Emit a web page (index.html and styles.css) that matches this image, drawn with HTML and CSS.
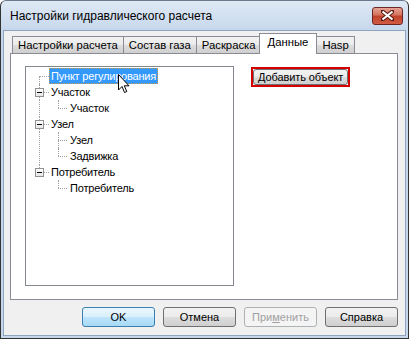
FILE: index.html
```html
<!DOCTYPE html>
<html lang="ru">
<head>
    <meta charset="UTF-8">
    <title>Настройки гидравлического расчета</title>
    <link rel="stylesheet" href="styles.css">
</head>
<body>
    <div class="window">
        <div class="titlebar">
            <span class="title">Настройки гидравлического расчета</span>
            <button class="close">
                <svg width="13" height="11" viewBox="0 0 13 11">
                    <path d="M1 1 L12 10 M12 1 L1 10" stroke="#5a1a12" stroke-width="4" stroke-linecap="square"/>
                    <path d="M1.5 1.5 L11.5 9.5 M11.5 1.5 L1.5 9.5" stroke="#fff" stroke-width="2.2"/>
                </svg>
            </button>
        </div>
        <div class="client">
            <div class="tabs">
                <div class="tab">Настройки расчета</div>
                <div class="tab">Состав газа</div>
                <div class="tab">Раскраска</div>
                <div class="tab active">Данные</div>
                <div class="tab">Hasp</div>
            </div>
            <div class="panel">
                <div class="tree">
                    <div class="node root first">
                        <span class="label selected">Пункт регулирования</span>
                    </div>
                    <div class="node root">
                        <span class="box"></span>
                        <span class="label">Участок</span>
                    </div>
                    <div class="node child last">
                        <span class="label">Участок</span>
                    </div>
                    <div class="node root">
                        <span class="box"></span>
                        <span class="label">Узел</span>
                    </div>
                    <div class="node child">
                        <span class="label">Узел</span>
                    </div>
                    <div class="node child last">
                        <span class="label">Задвижка</span>
                    </div>
                    <div class="node root last-root">
                        <span class="box"></span>
                        <span class="label">Потребитель</span>
                    </div>
                    <div class="node child last no-trunk">
                        <span class="label">Потребитель</span>
                    </div>
                    <svg class="cursor" width="12" height="20" viewBox="0 0 12 20">
                        <path d="M0.5 0.5 L0.5 16 L4 12.5 L6.5 18.5 L8.8 17.5 L6.3 11.8 L11 11.8 Z" fill="#fff" stroke="#000" stroke-width="1"/>
                    </svg>
                </div>
                <div class="side">
                    <div class="add-wrap">
                        <button class="btn add">Добавить объект</button>
                    </div>
                </div>
            </div>
            <div class="buttons">
                <button class="btn default">OK</button>
                <button class="btn">Отмена</button>
                <button class="btn disabled">При<u>м</u>енить</button>
                <button class="btn">Справка</button>
            </div>
        </div>
    </div>
</body>
</html>
```

FILE: styles.css
```css
body {
    margin: 0;
    font-family: "Liberation Sans", Arial, sans-serif;
    font-size: 11px;
    color: #000;
}
.window {
    width: 409px;
    height: 339px;
    box-sizing: border-box;
    border: 1px solid #333;
    border-top-color: #6b7a8c;
    border-radius: 6px 6px 0 0;
    background: linear-gradient(#dfe9f5, #c6d7ec 30px, #c6d7ec);
    padding: 0 2px 2px 2px;
    display: flex;
    flex-direction: column;
}
.titlebar {
    height: 29px;
    display: flex;
    align-items: center;
    padding: 0 3px 0 7px;
}
.title {
    font-size: 12px;
    color: #000;
    flex: 1;
}
.close {
    width: 31px;
    height: 18px;
    padding: 0;
    border: 1px solid #6d2626;
    border-radius: 3px;
    background: linear-gradient(#e6a495, #d46f5b 45%, #c0412a 50%, #d25b43);
    display: flex;
    align-items: center;
    justify-content: center;
}
.client {
    flex: 1;
    background: #f0f0f0;
    border: 1px solid #8ea3bd;
    display: flex;
    flex-direction: column;
    padding: 2px 7px 0 6px;
}
.tabs {
    display: flex;
    align-items: flex-end;
    height: 20px;
    padding-left: 2px;
    position: relative;
    z-index: 1;
    font-size: 11.3px;
}
.tab {
    height: 16px;
    padding: 0 5px;
    border: 1px solid #898c95;
    border-bottom: none;
    background: linear-gradient(#f2f2f2, #ebebeb 50%, #dddddd 50%, #cfcfcf);
    line-height: 16px;
    margin-right: -1px;
}
.tab.active {
    line-height: 17px;
    background: #fff;
    margin: 0 -1px -1px -2px;
    padding: 0 8px;
    position: relative;
    z-index: 2;
    height: 20px;
}
.panel {
    height: 247px;
    box-sizing: border-box;
    background: #fff;
    border: 1px solid #898c95;
    display: flex;
    padding: 12px 0 0 14px;
}
.tree {
    position: relative;
    width: 209px;
    height: 220px;
    box-sizing: border-box;
    border: 1px solid #828790;
    padding-top: 1px;
    font-size: 11px;
    letter-spacing: -0.2px;
}
.node {
    position: relative;
    height: 16px;
    display: flex;
    align-items: center;
}
.node.root {
    padding-left: 23px;
}
.node.child {
    padding-left: 42px;
}
.label {
    padding: 0 1px;
    line-height: 14px;
    border: 1px dotted transparent;
}
.label.selected {
    background: #3399ff;
    color: #fff;
    border: 1px dotted #c89a4b;
}
/* dotted tree lines */
.node.root::before {
    content: "";
    position: absolute;
    left: 13px;
    top: 8px;
    width: 10px;
    border-top: 1px dotted #a0a0a0;
}
.node.root::after {
    content: "";
    position: absolute;
    left: 13px;
    top: 0;
    height: 16px;
    border-left: 1px dotted #a0a0a0;
}
.node.first::after {
    top: 8px;
    height: 8px;
}
.node.last-root::after {
    height: 8px;
}
.node.child::before {
    content: "";
    position: absolute;
    left: 32px;
    top: 8px;
    width: 9px;
    border-top: 1px dotted #a0a0a0;
}
.node.child::after {
    content: "";
    position: absolute;
    left: 32px;
    top: 0;
    height: 16px;
    border-left: 1px dotted #a0a0a0;
}
.node.child.last::after {
    height: 8px;
}
.node.child {
    background-image: linear-gradient(#a0a0a0 50%, transparent 50%);
    background-size: 1px 2px;
    background-position: 13px 0;
    background-repeat: repeat-y;
}
.node.no-trunk {
    background: none;
}
.box {
    position: absolute;
    left: 9px;
    top: 4px;
    width: 7px;
    height: 7px;
    border: 1px solid #919191;
    background: linear-gradient(#fff, #e6e6e6);
    z-index: 1;
}
.box::after {
    content: "";
    position: absolute;
    left: 1px;
    top: 3px;
    width: 5px;
    height: 1px;
    background: #000;
}
.cursor {
    position: absolute;
    left: 92px;
    top: 7px;
}
.side {
    padding: 1px 0 0 17px;
}
.add-wrap {
    border: 2px solid #d40000;
}
.btn {
    font-family: "Liberation Sans", Arial, sans-serif;
    font-size: 11px;
    font-weight: normal;
    color: #000;
    border: 1px solid #707070;
    border-radius: 3px;
    background: linear-gradient(#f2f2f2, #ebebeb 50%, #dddddd 50%, #cfcfcf);
    padding: 0;
    display: block;
}
.add {
    height: 16px;
    padding: 0 4px;
    letter-spacing: -0.1px;
}
.buttons {
    display: flex;
    justify-content: flex-end;
    gap: 8px;
    padding: 7px 0 0 0;
}
.buttons .btn {
    width: 73px;
    height: 20px;
}
.btn.default {
    border-color: #3c7fb1;
    background: linear-gradient(#eaf6fd, #d9f0fc 50%, #bee6fd 50%, #a7d9f5);
}
.btn.disabled {
    color: #a0a0a0;
    border-color: #adb2b5;
    background: #f4f4f4;
}
```
